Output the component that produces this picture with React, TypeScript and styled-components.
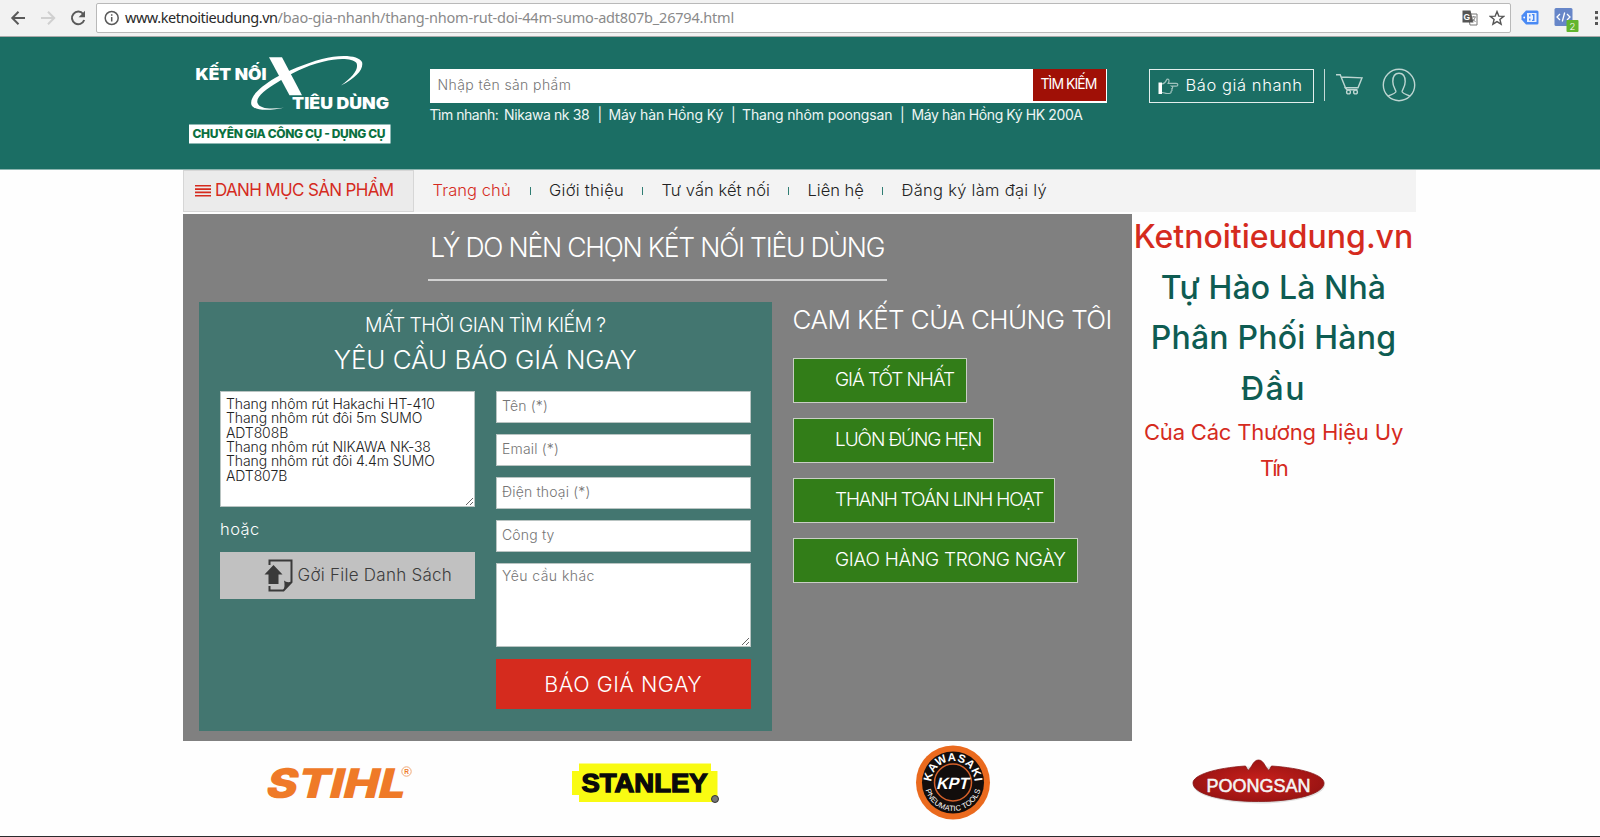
import React from 'react';
import styled, { createGlobalStyle } from 'styled-components';

const GlobalStyle = createGlobalStyle`
  * { box-sizing: border-box; }
  body {
    margin: 0;
    background: #fefefe;
    font-family: Inter, 'Noto Sans', sans-serif;
    font-weight: 300;
    overflow: hidden;
  }
  input, textarea, button { font-family: inherit; font-weight: inherit; }
`;

const Page = styled.div`
  width: 1600px;
  height: 837px;
  display: flex;
  flex-direction: column;
  border-bottom: 1px solid #2b2b2d;
`;

/* ---------- browser bar ---------- */

const BrowserBar = styled.div`
  height: 37px;
  flex: none;
  display: flex;
  align-items: center;
  background: #f2f2f2;
  border-bottom: 1px solid #a9a9a9;
  padding: 0 0 1px 10px;
  overflow: hidden;
`;

const NavIcons = styled.div`
  display: flex;
  width: 86px;
  gap: 12px;
  flex: none;
`;

const AddressBar = styled.div`
  display: flex;
  align-items: center;
  width: 1415px;
  height: 30px;
  flex: none;
  padding: 0 5px 0 7px;
  background: #fff;
  border: 1px solid #b9b9b9;
  border-radius: 2px;
`;

const AddressIcons = styled.div`
  display: flex;
  gap: 11px;
`;

const Url = styled.div`
  flex: 1;
  margin-left: 5px;
  padding-bottom: 2px;
  font: 400 14.5px/26px 'Noto Sans', 'Open Sans', sans-serif;
  letter-spacing: -0.2px;
  color: #8a8a8a;
  white-space: nowrap;
`;

const Host = styled.span`
  color: #2a2a2a;
  letter-spacing: -0.46px;
`;

const Extensions = styled.div`
  display: flex;
  align-items: center;
  margin-left: 10px;
  gap: 15px;
`;

/* ---------- header ---------- */

const Header = styled.header`
  height: 133px;
  flex: none;
  display: flex;
  align-items: flex-start;
  padding: 8px 0 0 180px;
  background: #1b6e64;
  border-bottom: 1px solid #8db5b0;
`;

const SearchColumn = styled.div`
  width: 677px;
  margin: 24px 0 0 29.5px;
`;

const SearchBox = styled.div`
  display: flex;
  height: 34px;
  background: #fff;
  padding: 0 1px 2px 0;
`;

const SearchInput = styled.input`
  flex: 1;
  border: 0;
  outline: 0;
  padding: 0 8px 2px;
  background: none;
  font-size: 14px;
  letter-spacing: 0.4px;
  &::placeholder { color: #757575; opacity: 1; }
`;

const SearchButton = styled.button`
  width: 73px;
  border: 0;
  padding: 0 1px 3px 0;
  background: #a01006;
  color: #fff;
  font-size: 14px;
  font-weight: 400;
  letter-spacing: -0.95px;
`;

const QuickLinks = styled.div`
  display: flex;
  margin-top: 3px;
  font-size: 14px;
  font-weight: 400;
  line-height: 18px;
  color: #eef6f4;
  white-space: nowrap;
`;

const QuickItem = styled.span<{ $w: number; $ls: number }>`
  width: ${(p) => p.$w}px;
  letter-spacing: ${(p) => p.$ls}px;
`;

const QuoteButton = styled.a`
  display: flex;
  align-items: center;
  width: 165px;
  height: 34px;
  margin: 24px 0 0 42px;
  padding: 0 0 3px 8px;
  border: 1px solid #e4efed;
  color: #fff;
  font-size: 16.5px;
  letter-spacing: 0.58px;
  white-space: nowrap;
  svg { margin: 4px 7px 0 0; }
`;

const AccountIcons = styled.div`
  display: flex;
  align-items: center;
  height: 32px;
  margin: 24px 0 0 10px;
  padding-left: 11px;
  border-left: 1px solid #c5dad7;
  gap: 18.5px;
`;

/* ---------- navigation ---------- */

const NavBar = styled.nav`
  display: flex;
  width: 1232.5px;
  height: 42px;
  flex: none;
  margin-left: 183px;
  background: #f3f3f3;
`;

const CategoryButton = styled.div`
  display: flex;
  align-items: center;
  width: 231px;
  padding: 0 0 2px 10.5px;
  background: #ebebeb;
  border: 1px solid #d6d6d6;
  color: #d52b1e;
  font-size: 17px;
  font-weight: 400;
  letter-spacing: -0.66px;
  white-space: nowrap;
  svg { margin: 2px 4.5px 0 0; }
`;

const NavItem = styled.a<{ $w: number; $ls: number; $active?: boolean }>`
  width: ${(p) => p.$w}px;
  font-size: 16.5px;
  line-height: 40px;
  letter-spacing: ${(p) => p.$ls}px;
  color: ${(p) => (p.$active ? '#d52b1e' : '#222')};
  white-space: nowrap;
`;

const NavLinks = styled.div`
  display: flex;
  padding-left: 18.5px;
`;

const NavSeparator = styled.i`
  width: 1px;
  height: 8px;
  margin: 17px 18.5px 0 0;
  background: #2f7d73;
`;

/* ---------- main area ---------- */

const Main = styled.main`
  display: flex;
  height: 529px;
  flex: none;
  margin-left: 183px;
`;

const Panel = styled.section`
  width: 948.5px;
  height: 527px;
  margin-top: 2px;
  padding: 8px 16px 0;
  background: #808080;
  color: #fff;
`;

const PanelTitle = styled.h1`
  width: 458.5px;
  height: 59px;
  margin: 0 auto 21px;
  border-bottom: 2px solid #d2d2d2;
  font-size: 26.5px;
  font-weight: 300;
  line-height: 50px;
  letter-spacing: -1.2px;
  text-align: center;
  white-space: nowrap;
`;

const PanelColumns = styled.div`
  display: flex;
  gap: 21px;
`;

const QuoteForm = styled.form`
  width: 572.5px;
  height: 428.5px;
  padding: 5px 21px 0;
  background: #437670;
`;

const FormTitle = styled.div<{ $size: number; $height: number; $ls: number }>`
  font-size: ${(p) => p.$size}px;
  line-height: ${(p) => p.$height}px;
  letter-spacing: ${(p) => p.$ls}px;
  text-align: center;
`;

const FormColumns = styled.div`
  display: grid;
  grid-template-columns: 255px 254.5px;
  column-gap: 21px;
  margin-top: 14px;
`;

const FormColumn = styled.div`
  display: flex;
  flex-direction: column;
  align-items: stretch;
`;

const Area = styled.textarea<{ $height: number }>`
  display: block;
  height: ${(p) => p.$height}px;
  padding: 5px 5px;
  border: 1px solid #b9c4c2;
  border-radius: 0;
  outline: 0;
  background: #fff;
  color: #222;
  font-size: 14px;
  line-height: 14.35px;
  letter-spacing: -0.09px;
  resize: vertical;
  &::placeholder { color: #757575; opacity: 1; letter-spacing: 0.44px; }
`;

const Field = styled.input`
  height: 31.5px;
  margin-bottom: 11.5px;
  padding: 0 5px 2px;
  border: 1px solid #b9c4c2;
  outline: 0;
  background: #fff;
  font-size: 14px;
  letter-spacing: 0.17px;
  &::placeholder { color: #757575; opacity: 1; }
`;

const OrLabel = styled.div`
  height: 45px;
  font-size: 16.5px;
  line-height: 44px;
  letter-spacing: 0.45px;
`;

const UploadButton = styled.div`
  display: flex;
  align-items: center;
  height: 46.5px;
  padding-left: 44px;
  background: #c1c1c1;
  color: #3c3c3c;
  font-size: 17px;
  letter-spacing: 0.26px;
  svg { margin: 0 3.5px 0 0; }
`;

const SubmitButton = styled.button`
  height: 50px;
  margin-top: 12px;
  border: 0;
  padding: 0;
  background: #d52b1e;
  color: #fff;
  font-size: 21.5px;
  letter-spacing: 0.55px;
`;

const Commitments = styled.div`
  display: flex;
  flex-direction: column;
  align-items: flex-start;
`;

const CommitTitle = styled.h2`
  margin: 0;
  height: 56px;
  font-size: 26px;
  font-weight: 300;
  line-height: 36px;
  letter-spacing: -0.57px;
  white-space: nowrap;
`;

const Commitment = styled.div<{ $w: number; $ls: number }>`
  width: ${(p) => p.$w}px;
  height: 45px;
  margin-bottom: 15px;
  padding-left: 41.5px;
  border: 1px solid #c9cfc5;
  background: #327d18;
  font-size: 19px;
  line-height: 42px;
  letter-spacing: ${(p) => p.$ls}px;
  white-space: nowrap;
`;

const Slogan = styled.aside`
  width: 284px;
  text-align: center;
`;

const SloganLine = styled.div<{ $red?: boolean; $small?: boolean; $ls: number }>`
  font-size: ${(p) => (p.$small ? 22 : 32)}px;
  font-weight: ${(p) => (p.$small ? 400 : 500)};
  line-height: ${(p) => (p.$small ? 36 : 50.5)}px;
  letter-spacing: ${(p) => p.$ls}px;
  color: ${(p) => (p.$red ? '#d52b1e' : '#0e5c52')};
  white-space: nowrap;
`;

/* ---------- brands ---------- */

const Brands = styled.section`
  display: grid;
  grid-template-columns: repeat(4, 308px);
  margin-left: 183px;
  height: 95px;
`;

const heavy = { fontFamily: 'Inter, sans-serif', fontWeight: 900 };
const arial = { fontFamily: '"Liberation Sans", Arial, sans-serif', fontWeight: 700 };

const Logo = () => (
  <svg width="220" height="110" viewBox="0 0 220 110" fill="#fff">
    <text x="15.5" y="35" fontSize="15.6" textLength="71" lengthAdjust="spacingAndGlyphs" {...heavy}>KẾT NỐI</text>
    <path d="M89 12.3h13l20 38h-12.500z" />
    <path d="M161 40.500C176 33 184 24 182 17C179 10 160 9 142 14C125 18.500 108 26 95 33C80 42 69 52 71.500 60C75 67 93 65 104 62.700C92 64 80 64.500 77.500 58C75.500 52 86 44 98 37C110 29 125 21 143 16.700C158 13 172 13 176.500 18C179 24 173 32 161 40.500z" />
    <text x="112" y="64" fontSize="15.6" textLength="97" lengthAdjust="spacingAndGlyphs" {...heavy}>TIÊU DÙNG</text>
    <rect x="9" y="79.500" width="201.500" height="19" />
    <text x="12.500" y="93" fontSize="12" fill="#0b7040" textLength="193" lengthAdjust="spacing" {...heavy} fontWeight={800}>CHUYÊN GIA CÔNG CỤ - DỤNG CỤ</text>
  </svg>
);

const BackIcon = ({ color }: { color: string }) => (
  <svg width="18" height="18" viewBox="0 0 18 18" fill="none" stroke={color} strokeWidth="2">
    <path d="M15 9H3M8.500 2.800L2.300 9L8.500 15.200" />
  </svg>
);

const ForwardIcon = ({ color }: { color: string }) => (
  <svg width="18" height="18" viewBox="0 0 18 18" fill="none" stroke={color} strokeWidth="2">
    <path d="M1 9h13M8 2.800L14.200 9L8 15.200" />
  </svg>
);

const ReloadIcon = () => (
  <svg width="18" height="18" viewBox="0 0 18 18">
    <path d="M13.200 5A6.300 6.300 0 1 0 14.200 11" fill="none" stroke="#5a5a5a" strokeWidth="2" />
    <path d="M15 1.800v6.400H8.600z" fill="#5a5a5a" />
  </svg>
);

const InfoIcon = () => (
  <svg width="16" height="16" viewBox="0 0 16 16" fill="none" stroke="#5a5a5a" strokeWidth="1.5">
    <circle cx="7.700" cy="8" r="6.500" />
    <path d="M7.700 7v4.500M7.700 4.200v1.600" />
  </svg>
);

const TranslateIcon = () => (
  <svg width="16" height="16" viewBox="0 0 16 16">
    <path d="M6 4h9v11H8z" fill="#fff" stroke="#777" />
    <path d="M0.500 0.500h8l3 12h-11z" fill="#555" />
    <text x="1.500" y="9.500" fontSize="8.500" fill="#fff" {...arial}>G</text>
    <path d="M9.500 7h4.500M11.800 6v1M13 7.500c-.5 2-1.500 3-2.500 4M10.800 9l2.700 3" stroke="#777" fill="none" strokeWidth="0.9" />
  </svg>
);

const StarIcon = () => (
  <svg width="16" height="16" viewBox="0 0 16 16" fill="none" stroke="#555" strokeWidth="1.400">
    <path d="M8 1.600l1.800 4.500 4.800.3-3.700 3 1.200 4.800L8 11.600l-4.100 2.600 1.200-4.800-3.700-3 4.800-.3z" />
  </svg>
);

const TagIcon = () => (
  <svg width="18" height="16" viewBox="0 0 18 16">
    <path d="M5 .5h11q1.500 0 1.500 1.500v11q0 1.500-1.500 1.500H5L.5 9.500v-4z" fill="#4a8af4" />
    <path d="M6 3h9.500v9H6z" fill="#e8f0fe" />
    <path d="M8 4.500h1.500v2H8zM8 8.500h1.500v2H8zM11 4h2.500v7H11v-1.200h1V5.200h-1z" fill="#4a8af4" />
    <circle cx="3.200" cy="7.500" r=".9" fill="#fff" />
  </svg>
);

const CodeIcon = () => (
  <svg width="25" height="20" viewBox="0 0 25 20" overflow="visible">
    <rect x="0.500" y="0" width="18" height="18" rx="1.500" fill="#6786c8" />
    <path d="M6 6L3 9l3 3M13 6l3 3-3 3M10.700 4.500L8.300 13.500" stroke="#fff" fill="none" strokeWidth="1.300" />
    <rect x="12.500" y="12" width="12" height="12" rx="1" fill="#62b52e" />
    <text x="15.500" y="21.800" fontSize="9.500" fill="#fff">2</text>
  </svg>
);

const DotsIcon = () => (
  <svg width="4" height="16" viewBox="0 0 4 16" fill="#555">
    <rect x="1" y="1" width="3" height="3" /><rect x="1" y="6.500" width="3" height="3" /><rect x="1" y="12" width="3" height="3" />
  </svg>
);

const HandIcon = () => (
  <svg width="21" height="17" viewBox="0 0 21 17" fill="none" stroke="#9fc2bd" strokeWidth="1.200">
    <path d="M4 6c2.500-.3 3.700-2 4.500-4 .5-1.300 2.500-1.200 2.500.7 0 1-.4 1.900-.8 2.600h8c2.200 0 2.200 2.900 0 2.900h-4.400c1.300.8 1 2.300-.1 2.700.7.9.4 2-.6 2.400.3 1.400-.5 2.200-1.900 2.200H9c-2 0-2.800-1-5-1" />
    <rect x="0.500" y="4.500" width="3.500" height="11.500" fill="#fff" stroke="none" />
  </svg>
);

const CartIcon = () => (
  <svg width="28" height="22" viewBox="0 0 28 22" fill="none" stroke="#bdd5d1" strokeWidth="1.400">
    <path d="M0 .8h4.200L9.500 13.800h12.500L26 3.800L5.500 3M8.500 13l2.500 2.800h10.500" />
    <circle cx="12.500" cy="18" r="1.900" /><circle cx="19.500" cy="18" r="1.900" />
  </svg>
);

const UserIcon = () => (
  <svg width="34" height="34" viewBox="0 0 34 34" fill="none" stroke="#bdd5d1" strokeWidth="1.400">
    <circle cx="17" cy="17" r="15.700" />
    <path d="M6 28.300c1.500-1.300 6.500-2 7.800-4.300.7-2.200-3-4-3-10.500 0-5.500 2.500-8.300 6.200-8.300s6.200 2.800 6.200 8.300c0 6.500-3.700 8.300-3 10.500 1.300 2.300 6.300 3 7.800 4.300" />
  </svg>
);

const MenuIcon = () => (
  <svg width="16" height="12" viewBox="0 0 16 12" fill="#d52b1e">
    <path d="M0 0h16v1.600H0zM0 3.300h16v1.600H0zM0 6.600h16v1.600H0zM0 9.900h16v1.600H0z" />
  </svg>
);

const UploadIcon = () => (
  <svg width="30" height="33" viewBox="0 0 30 33">
    <path d="M5.500 6V1.500h22V23l-8 8.500h-14V27" fill="none" stroke="#3a3a3a" strokeWidth="2" />
    <path d="M19 32l9-9.500q-5 2-8-1 1.500 6-1 10.500z" fill="#3a3a3a" />
    <path d="M9.500 6l9 9.500h-4V25h-10v-9.500h-4z" fill="#3a3a3a" />
  </svg>
);

const Stihl = () => (
  <svg width="308" height="95" viewBox="0 0 308 95">
    <text transform="translate(81 56.500) skewX(-14)" fontSize="41" fill="#ef7a28" textLength="139" lengthAdjust="spacingAndGlyphs" {...heavy}>STIHL</text>
    <circle cx="223.500" cy="30.500" r="4.700" fill="none" stroke="#f0a878" />
    <text x="221.200" y="33" fontSize="6.500" fill="#ef7a28" {...arial}>R</text>
  </svg>
);

const Stanley = () => (
  <svg width="308" height="95" viewBox="0 0 308 95">
    <path d="M88 22.500h132V30h6.500v31H88v-7h-7V30h7z" fill="#f9fb12" />
    <text x="90.500" y="50.500" fontSize="25.500" textLength="126" lengthAdjust="spacingAndGlyphs" fill="#0a0a0a" {...arial} stroke="#0a0a0a" strokeWidth="1.300">STANLEY</text>
    <circle cx="224" cy="58" r="3.500" fill="#777" stroke="#333" />
  </svg>
);

const Kawasaki = () => (
  <svg width="308" height="95" viewBox="0 0 308 95">
    <defs>
      <path id="kawasaki-top" d="M138.800 56.700A21.500 21.500 0 1 1 169.200 56.700" />
      <path id="kawasaki-bottom" d="M127.200 31.700A28.500 28.500 0 1 0 180.800 31.700" />
    </defs>
    <circle cx="154" cy="41.500" r="37" fill="#ea6a1e" />
    <circle cx="154" cy="41.500" r="31" fill="#120d0c" />
    <circle cx="154" cy="41.500" r="18.500" fill="none" stroke="#d5602a" strokeWidth="1.500" />
    <text fontSize="11.500" letterSpacing="0.500" fill="#fff" textAnchor="middle" {...arial}><textPath href="#kawasaki-top" startOffset="50%">KAWASAKI</textPath></text>
    <text fontSize="7.600" letterSpacing="0.150" fill="#fff" textAnchor="middle" {...arial} fontWeight={400}><textPath href="#kawasaki-bottom" startOffset="50%">PNEUMATIC TOOLS</textPath></text>
    <text transform="translate(137 47.500) skewX(-14)" fontSize="16.500" fill="#fff" textLength="32" lengthAdjust="spacingAndGlyphs" {...arial}>KPT</text>
  </svg>
);

const Poongsan = () => (
  <svg width="308" height="95" viewBox="0 0 308 95">
    <defs>
      <radialGradient id="poongsan-red">
        <stop offset="0" stopColor="#c8201c" />
        <stop offset="1" stopColor="#9c1413" />
      </radialGradient>
    </defs>
    <ellipse cx="152" cy="44" rx="66" ry="18.500" fill="#ccc" opacity="0.600" />
    <path d="M86 42c0-8 22-15 52.500-17l2.500 4.500c4-3 5-10.500 10.500-10.500s6.500 7.500 10.500 10.500l2.500-4.500c30.500 2 52.500 9 52.500 17 0 11-29 18.500-65.500 18.500S86 53 86 42z" fill="url(#poongsan-red)" stroke="#861414" strokeWidth="0.800" />
    <text x="99.500" y="51" fontSize="17.500" fill="#f4f4f4" textLength="104" lengthAdjust="spacingAndGlyphs" {...arial} fontWeight={400} stroke="#f4f4f4" strokeWidth="0.500">POONGSAN</text>
  </svg>
);

const quickLinks: [string, number, number][] = [
  ['Tìm nhanh:', 74.5, -0.48],
  ['Nikawa nk 38', 93.5, -0.4],
  ['|', 11, 0],
  ['Máy hàn Hồng Ký', 122.5, -0.14],
  ['|', 11, 0],
  ['Thang nhôm poongsan', 158, -0.13],
  ['|', 11.5, 0],
  ['Máy hàn Hồng Ký HK 200A', 171, -0.4],
];

const navItems: [string, number, number][] = [
  ['Trang chủ', 97, 0.08],
  ['Giới thiệu', 93, 0.3],
  ['Tư vấn kết nối', 126.5, 0.08],
  ['Liên hệ', 74.5, 0],
  ['Đăng ký làm đại lý', 146, 0.29],
];

const commitments: [string, number, number][] = [
  ['GIÁ TỐT NHẤT', 174, -1.06],
  ['LUÔN ĐÚNG HẸN', 201, -1.08],
  ['THANH TOÁN LINH HOẠT', 262, -1.18],
  ['GIAO HÀNG TRONG NGÀY', 285, -0.29],
];

const productList = [
  'Thang nhôm rút Hakachi HT-410',
  'Thang nhôm rút đôi 5m SUMO',
  'ADT808B',
  'Thang nhôm rút NIKAWA NK-38',
  'Thang nhôm rút đôi 4.4m SUMO',
  'ADT807B',
].join('\n');

export default function App() {
  return (
    <Page>
      <GlobalStyle />
      <BrowserBar>
        <NavIcons>
          <BackIcon color="#5a5a5a" />
          <ForwardIcon color="#d0d0d0" />
          <ReloadIcon />
        </NavIcons>
        <AddressBar>
          <InfoIcon />
          <Url><Host>www.ketnoitieudung.vn</Host>/bao-gia-nhanh/thang-nhom-rut-doi-44m-sumo-adt807b_26794.html</Url>
          <AddressIcons>
            <TranslateIcon />
            <StarIcon />
          </AddressIcons>
        </AddressBar>
        <Extensions>
          <TagIcon />
          <CodeIcon />
          <DotsIcon />
        </Extensions>
      </BrowserBar>

      <Header>
        <Logo />
        <SearchColumn>
          <SearchBox>
            <SearchInput placeholder="Nhập tên sản phẩm" />
            <SearchButton>TÌM KIẾM</SearchButton>
          </SearchBox>
          <QuickLinks>
            {quickLinks.map(([text, w, ls], i) => (
              <QuickItem key={i} $w={w} $ls={ls}>{text}</QuickItem>
            ))}
          </QuickLinks>
        </SearchColumn>
        <QuoteButton><HandIcon />Báo giá nhanh</QuoteButton>
        <AccountIcons>
          <CartIcon />
          <UserIcon />
        </AccountIcons>
      </Header>

      <NavBar>
        <CategoryButton><MenuIcon />DANH MỤC SẢN PHẨM</CategoryButton>
        <NavLinks>
          {navItems.map(([text, w, ls], i) => (
            <React.Fragment key={text}>
              <NavItem $w={w} $ls={ls} $active={i === 0}>{text}</NavItem>
              {i < navItems.length - 1 && <NavSeparator />}
            </React.Fragment>
          ))}
        </NavLinks>
      </NavBar>

      <Main>
        <Panel>
          <PanelTitle>LÝ DO NÊN CHỌN KẾT NỐI TIÊU DÙNG</PanelTitle>
          <PanelColumns>
            <QuoteForm>
              <FormTitle $size={19.5} $height={36} $ls={-0.6}>MẤT THỜI GIAN TÌM KIẾM ?</FormTitle>
              <FormTitle $size={26} $height={34} $ls={-0.05}>YÊU CẦU BÁO GIÁ NGAY</FormTitle>
              <FormColumns>
                <FormColumn>
                  <Area $height={116} defaultValue={productList} />
                  <OrLabel>hoặc</OrLabel>
                  <UploadButton><UploadIcon />Gởi File Danh Sách</UploadButton>
                </FormColumn>
                <FormColumn>
                  <Field placeholder="Tên (*)" />
                  <Field placeholder="Email (*)" />
                  <Field placeholder="Điện thoại (*)" />
                  <Field placeholder="Công ty" />
                  <Area $height={84} placeholder="Yêu cầu khác" />
                  <SubmitButton type="button">BÁO GIÁ NGAY</SubmitButton>
                </FormColumn>
              </FormColumns>
            </QuoteForm>
            <Commitments>
              <CommitTitle>CAM KẾT CỦA CHÚNG TÔI</CommitTitle>
              {commitments.map(([text, w, ls]) => (
                <Commitment key={text} $w={w} $ls={ls}>{text}</Commitment>
              ))}
            </Commitments>
          </PanelColumns>
        </Panel>
        <Slogan>
          <SloganLine $red $ls={0}>Ketnoitieudung.vn</SloganLine>
          <SloganLine $ls={0.13}>Tự Hào Là Nhà</SloganLine>
          <SloganLine $ls={0.22}>Phân Phối Hàng</SloganLine>
          <SloganLine $ls={1.5}>Đầu</SloganLine>
          <SloganLine $red $small $ls={-0.18}>Của Các Thương Hiệu Uy</SloganLine>
          <SloganLine $red $small $ls={-1.8}>Tín</SloganLine>
        </Slogan>
      </Main>

      <Brands>
        <Stihl />
        <Stanley />
        <Kawasaki />
        <Poongsan />
      </Brands>
    </Page>
  );
}
